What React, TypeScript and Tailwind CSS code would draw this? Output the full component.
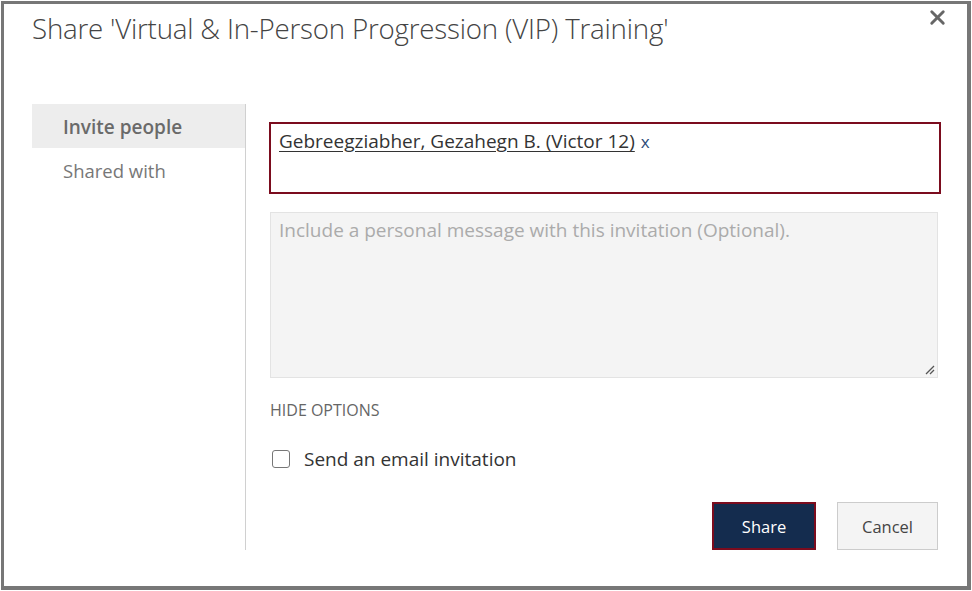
import { X } from "lucide-react";

export default function App() {
  return (
    <div className="w-[972px] h-[591px] bg-white" style={{ fontFamily: "'Open Sans', 'Noto Sans', sans-serif" }}>
      <div className="ml-px mt-px w-[970px] h-[589px] border-[3px] border-r-4 border-b-4 border-[#777777] bg-white">
        {/* Header */}
        <div className="flex justify-between items-start pl-[28px] pr-[18px]">
          <h1 className="mt-[6px] text-[27.7px] font-light text-[#444444] leading-[36px] tracking-[-0.2px]">
            Share 'Virtual &amp; In-Person Progression (VIP) Training'
          </h1>
          <button className="mt-[2px] text-[#666666]">
            <X size={23} strokeWidth={3} />
          </button>
        </div>

        {/* Body */}
        <div className="flex mt-[58px] pl-[28px]">
          {/* Left nav */}
          <div className="w-[214px] h-[446px] border-r border-[#d0d0d0]">
            <div className="h-[44px] bg-[#ededed] flex items-center pl-[31px] pt-[3px] text-[19px] font-semibold text-[#6a6a6a]">
              Invite people
            </div>
            <div className="h-[44px] flex items-center pl-[31px] pt-[2px] text-[18.5px] text-[#777777]">
              Shared with
            </div>
          </div>

          {/* Right content */}
          <div className="pl-[23px] pt-[18px]">
            <div className="w-[672px] h-[72px] border-2 border-[#7b0c1e] px-[8px] pt-[3px] text-[19px] text-[#333333]">
              <span className="underline underline-offset-[3px]">Gebreegziabher, Gezahegn B. (Victor 12)</span>
              <span className="ml-[6px] text-[#2b4a78] text-[17px]">x</span>
            </div>

            <div className="relative ml-px mt-[18px] w-[668px] h-[166px] bg-[#f4f4f4] border border-[#e3e3e3] px-[8px] pt-[3px] text-[19px] text-[#ababab]">
              Include a personal message with this invitation (Optional).
              <svg className="absolute right-[2px] bottom-[2px]" width="10" height="10" viewBox="0 0 10 10">
                <line x1="1" y1="9" x2="9" y2="1" stroke="#555" strokeWidth="1.3" />
                <line x1="5" y1="9" x2="9" y2="5" stroke="#555" strokeWidth="1.3" />
              </svg>
            </div>

            <div className="mt-[22px] ml-[1px] text-[16px] text-[#666666] leading-[20px]">
              HIDE OPTIONS
            </div>

            <div className="flex items-center mt-[27px] ml-[3px] h-[24px]">
              <div className="w-[18px] h-[18px] rounded-[3px] border-[1.5px] border-[#777777] bg-white" />
              <span className="ml-[14px] text-[19px] text-[#333333]">Send an email invitation</span>
            </div>

            <div className="flex justify-end mt-[31px] w-[669px]">
              <button className="w-[104px] h-[48px] pt-[2px] bg-[#142c4e] border-2 border-[#7b0c1e] text-white text-[16.5px]">
                Share
              </button>
              <button className="ml-[21px] w-[101px] h-[48px] pt-[2px] bg-[#f4f4f4] border border-[#cccccc] text-[#444444] text-[16.5px]">
                Cancel
              </button>
            </div>
          </div>
        </div>
      </div>
    </div>
  );
}
